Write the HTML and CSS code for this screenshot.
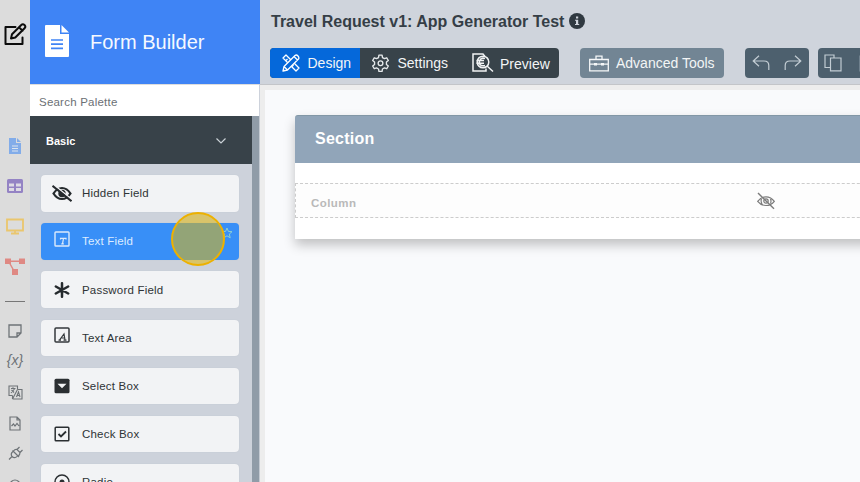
FILE: index.html
```html
<!DOCTYPE html>
<html lang="en">
<head>
<meta charset="utf-8">
<title>Form Builder</title>
<link rel="stylesheet" href="styles.css">
</head>
<body>
<div class="app">
  <nav class="rail">
    <div class="rail-edit"><svg width="24" height="24" viewBox="0 0 24 24" fill="none" stroke="#0b0b0b" stroke-width="2" stroke-linejoin="round" stroke-linecap="round"><path d="M12.500 4H2.500v17h17v-6.500"/><path d="M18 2.200 9 11.200 8 15.500l4.300-1L21.800 5Q23 3.500 21.500 2 19.800.500 18 2.200ZM16 4.200l3.500 3.500"/></svg></div>
    <div class="rail-app"><svg width="12" height="16" viewBox="0 0 12 16"><path fill="#82ace9" d="M0 0h7v5h5v11H0zM8 0l4 4H8z"/><path stroke="#dce4ee" d="M3 8h6M3 10.500h6M3 13h6"/></svg></div>
    <div class="rail-app"><svg width="16" height="14" viewBox="0 0 16 14"><rect width="16" height="14" rx="1.500" fill="#9483c4"/><path fill="#dedbe4" d="M2 4.500h5v3H2zM9 4.500h5v3H9zM2 9h5v3H2zM9 9h5v3H9z"/></svg></div>
    <div class="rail-app"><svg width="18" height="17" viewBox="0 0 18 17"><path fill="none" stroke="#eac66d" stroke-width="1.800" d="M1 1.500h16v11H1zM9 12v4M5 15.500h8"/></svg></div>
    <div class="rail-app"><svg width="20" height="17" viewBox="0 0 20 17"><path stroke="#df8983" stroke-width="1.500" d="M3 3.200h14M4 4l5 9"/><path fill="#df8983" d="M0 .5h6v5.500H0zM14 .5h6v5.500h-6zM7 11h6v6H7z"/></svg></div>
    <div class="rail-divider"></div>
    <div class="rail-tool"><svg width="14" height="14" viewBox="0 0 14 14" fill="none" stroke="#6e7377" stroke-width="1.300"><path d="M1 1h12v8l-4 4H1zM13 9H9v4"/></svg></div>
    <div class="rail-tool rail-var">{x}</div>
    <div class="rail-tool rail-tall"><svg width="15" height="15" viewBox="0 0 15 15" fill="none" stroke="#6e7377" stroke-width="1.100"><path d="M9.500 4V1H1v9.500h3.500M9.500 4.500H14V14H4.500M9.500 4.500 4.500 14M4.500 10.500V14M3 3.500h4.500M5 2.300v1.200M6.500 4 3 8M3.500 5l2.500 2.500M8.500 12l2-5 1.500 5M9 10.500h2.500"/></svg></div>
    <div class="rail-tool"><svg width="12" height="15" viewBox="0 0 12 15" fill="none" stroke="#6e7377" stroke-width="1.200"><path d="M1 1h7l3 3v10H1zM8 1v3h3M2.500 10l2-2 1.500 2 2-2.500 2 2.500"/></svg></div>
    <div class="rail-tool"><svg width="15" height="15" viewBox="0 0 15 15" fill="none" stroke="#6e7377" stroke-width="1.200"><path d="M4.500 4.500l6.500 6.500M5 5.500C3 7 3 9 4 10.500 5.500 12 8 12 9.500 10M5.500 5Q7 3 9 3.500L12 6.500Q12 8.500 10.500 9.800M9 3.500l2.500-2.500M12 6.500l2.500-2.500M4 10.500 1 13.500"/></svg></div>
    <div class="rail-tool"><svg width="12" height="8" viewBox="0 0 12 8"><circle cx="6" cy="6" r="5" fill="none" stroke="#6e7377" stroke-width="1.200"/></svg></div>
  </nav>

  <aside class="palette">
    <header class="brand">
      <svg width="24" height="32" viewBox="0 0 24 32"><path fill="#fff" d="M1 0h14v9h9v22q0 1-1 1H1q-1 0-1-1V1q0-1 1-1zM16.500 0 24 7.500h-7.500z"/><path stroke="#3f84f5" stroke-width="1.700" d="M6 15h12M6 19.200h12M6 23.400h12"/></svg>
      <span>Form Builder</span>
    </header>
    <div class="search">Search Palette</div>
    <div class="palette-body">
      <div class="palette-scroll">
        <div class="group"><span>Basic</span><svg width="10" height="6" viewBox="0 0 10 6" fill="none" stroke="#cbd2d7" stroke-width="1.200"><path d="M.5.5 5 5 9.500.5"/></svg></div>
        <div class="fields">
          <div class="field"><svg class="icon" width="20" height="17" viewBox="0 0 20 17"><path fill="none" stroke="#252a2d" stroke-width="2.200" d="M1.500 8.500Q5 3 10 3t8.500 5.500Q15 14 10 14T1.500 8.500Z"/><circle cx="10" cy="8.500" r="3.700" fill="#252a2d"/><path stroke="#f2f3f5" stroke-width="1.500" d="m2 0 18 14.500"/><path stroke="#252a2d" stroke-width="2" d="m.5.800 19 15.400"/></svg><span>Hidden Field</span></div>
          <div class="field selected"><svg class="icon raised" width="16" height="16" viewBox="0 0 16 16" fill="none" stroke="#dceafb" stroke-width="1.400"><rect x="1" y="1" width="14" height="14" rx=".8"/><path d="M6.500 8.500V7.300H12v1.200M9.500 7.300l-1 5.500M7.300 12.800h2.500" stroke-width="1.200"/></svg><span>Text Field</span>
            <svg class="star" width="12" height="12" viewBox="0 0 12 12" fill="none" stroke="#8fd0cf"><path d="m6 1 1.400 3.400 3.600.3-2.700 2.400.9 3.700L6 8.800l-3.200 2 .9-3.700L1 4.700l3.600-.3z"/></svg>
            <div class="pointer"></div></div>
          <div class="field"><svg class="icon" width="16" height="16" viewBox="0 0 16 16" stroke="#252a2d" stroke-width="2.500" stroke-linecap="round"><path d="M8 1.200v13.600M1.800 4.500l12.400 7M14.200 4.500l-12.400 7"/></svg><span>Password Field</span></div>
          <div class="field"><svg class="icon raised" width="16" height="16" viewBox="0 0 16 16" fill="none" stroke="#34393c" stroke-width="1.500"><rect x="1" y="1" width="14" height="14" rx="1"/><path d="m5.500 13 4.500-6 1 6M7 11h4M4.500 13.200H7M9.500 13.200h3" stroke-width="1.200"/></svg><span>Text Area</span></div>
          <div class="field"><svg class="icon" width="16" height="16" viewBox="0 0 16 16"><rect x=".5" y=".8" width="15" height="14.500" rx="1.500" fill="#2b2f32"/><path fill="#f2f3f5" d="M3.500 5.800h9L8 10.300z"/></svg><span>Select Box</span></div>
          <div class="field"><svg class="icon" width="16" height="16" viewBox="0 0 16 16" fill="none" stroke="#2b2f32" stroke-width="1.500"><rect x="1.200" y="1.200" width="13.600" height="13.600" rx=".8"/><path d="m4.500 8 2.500 2.500 5-5" stroke-width="1.800"/></svg><span>Check Box</span></div>
          <div class="field"><svg class="icon" width="16" height="16" viewBox="0 0 16 16"><circle cx="8" cy="8" r="7" fill="none" stroke="#2b2f32" stroke-width="1.500"/><circle cx="8" cy="8" r="2.500" fill="#2b2f32"/></svg><span>Radio</span></div>
        </div>
      </div>
      <div class="scrollbar"></div>
    </div>
  </aside>

  <main class="main">
    <header class="topbar">
      <h1 class="title"><span>Travel Request v1: App Generator Test</span><svg width="16" height="16" viewBox="0 0 16 16"><circle cx="8" cy="8" r="8" fill="#303941"/><path fill="#cfd4dc" d="M7 3.500h2.200v2H7zM6 6.700h3.200v4.200h1V12H6v-1.100h1V7.800H6z"/></svg></h1>
      <div class="toolbar">
        <div class="tabs">
          <div class="tab active"><svg width="18" height="18" viewBox="0 0 18 18" fill="none" stroke="#fff" stroke-width="1.300" stroke-linejoin="round"><path d="m4 1 13 13-3 3L1 4zM4 6.500 5.500 5M7 9.500 8.500 8M10 12.500l1.500-1.500"/><path fill="#0568da" d="M1 17l1-4.500L13 1.500Q14.500.300 16 2t.500 3L5.500 16zM2 12.500 5.500 16M12 2.500 15.500 6"/></svg><span>Design</span></div>
          <div class="tab settings"><svg width="19" height="19" viewBox="0 0 24 24" fill="none" stroke="#e5e9eb" stroke-width="1.700" stroke-linejoin="round"><path d="M9.500 4.500 10 1.500h4l.5 3 2.500 1.400 2.900-1.100 2 3.400-2.400 2v3l2.400 2-2 3.400-2.900-1.100-2.500 1.400-.5 3h-4l-.5-3L7 17.500l-2.900 1.100-2-3.400 2.400-2v-3l-2.400-2 2-3.400L7 5.900z"/><circle cx="12" cy="11.700" r="3"/></svg><span>Settings</span></div>
          <div class="tab preview"><svg width="22" height="20" viewBox="0 0 22 20" fill="none" stroke="#f1f3f4" stroke-width="1.500"><path d="M13 3.500 11 1H1v17h13v-2.500"/><circle cx="11" cy="9" r="5.800"/><path d="m15 13 6 5.500M13 5.500q-3.500-1.200-5 1.500t0 4.500 5 1M4.500 7.500H12M4.500 10.200H12"/></svg><span>Preview</span></div>
        </div>
        <div class="advanced"><svg width="20" height="17" viewBox="0 0 20 17" fill="none" stroke="#f5f7f8" stroke-width="1.300"><path d="M.7 4.500h18.600v11.300H.7zM7 4.500V1.200h6v3.300M1 9.200h18"/><path fill="#f5f7f8" stroke="none" d="M5 8h3v2.500H5zM12 8h3v2.500h-3z"/></svg><span>Advanced Tools</span></div>
        <div class="history">
          <svg width="18" height="16" viewBox="0 0 18 16" fill="none" stroke="#c2ccd3" stroke-width="1.200"><path d="M7 .8 1.200 6 7 11.200M1.500 6H12q4.800 0 4.800 4.500V15"/></svg>
          <svg width="18" height="16" viewBox="0 0 18 16" fill="none" stroke="#c2ccd3" stroke-width="1.200"><path d="m11 .8 5.800 5.200-5.800 5.200M16.500 6H6q-4.800 0-4.800 4.500V15"/></svg>
        </div>
        <div class="clipboard">
          <svg width="18" height="18" viewBox="0 0 18 18" fill="none" stroke="#c2ccd3" stroke-width="1.200"><path d="M6 13.500H1V1h9v2.500M6.500 4H17v12.800H6.500z"/></svg>
          <svg width="16" height="18" viewBox="0 0 16 18" fill="none" stroke="#8797a2" stroke-width="1.200"><path d="M1 2h14v15H1z"/></svg>
        </div>
      </div>
    </header>
    <div class="canvas">
      <section class="section">
        <h2>Section</h2>
        <div class="column"><span>Column</span><svg width="18" height="18" viewBox="0 0 18 18" fill="none" stroke="#7b7b7b" stroke-width="1.200"><path d="M.7 9.300Q4 4.800 9 4.800T17.300 9.300Q14 13.500 9 13.500T.7 9.300ZM4.500 7Q3.500 9 5 12M13.500 7q1 2 0 4.500"/><circle cx="9" cy="9" r="2.200"/><path d="m1 1 16 15.800" stroke-width="1.400"/></svg></div>
      </section>
    </div>
  </main>
</div>
</body>
</html>
```

FILE: styles.css
```css
* { box-sizing: border-box; }
body { margin: 0; font-family: "Liberation Sans", Arial, sans-serif; }
svg { display: block; flex: none; }
.app { display: flex; width: 860px; height: 482px; overflow: hidden; }

.rail { width: 30px; flex: none; background: #dcdcdc; height: 482px; overflow: hidden; }
.rail > div { display: flex; align-items: center; justify-content: center; }
.rail-edit { height: 70px; margin-bottom: 56px; }
.rail-app { height: 40px; }
.rail-divider { height: 30px; }
.rail-divider::before { content: ""; width: 20px; height: 1px; background: #777; }
.rail-tool { height: 30px; }
.rail .rail-tall { height: 32px; padding-bottom: 0; }
.rail .rail-var { color: #6e7377; font-size: 14px; font-style: italic; padding-bottom: 2px; }

.palette { width: 230px; flex: none; display: flex; flex-direction: column; background: #cdd2db; height: 482px; }
.brand { height: 84px; flex: none; background: #3f84f5; color: #f5f9ff; display: flex; align-items: center; gap: 21px; padding: 0 0 2px 15px; font-size: 20px; }
.brand span { padding-top: 3px; }
.search { height: 32px; flex: none; margin-right: 1px; background: #fff; color: #6c7075; font-size: 11.500px; letter-spacing: .22px; line-height: 35px; padding-left: 9px; border-top: 1px solid #ddd; }
.palette-body { flex: 1; min-height: 0; display: flex; overflow: hidden; }
.palette-scroll { width: 222px; }
.scrollbar { width: 8px; background: #909ca8; border-right: 1px solid #c5cbd3; }
.group { height: 48px; background: #384249; color: #fff; font-size: 11px; font-weight: bold; display: flex; align-items: center; justify-content: space-between; padding: 2px 26px 0 16px; }
.group span { padding-bottom: 1px; }
.fields { display: flex; flex-direction: column; gap: 11.700px; padding: 11px 13px 0 11px; }
.field { height: 36.500px; flex: none; background: #f2f3f5; border-radius: 4px; display: flex; align-items: center; color: #2f3336; font-size: 11.500px; letter-spacing: .2px; position: relative; box-shadow: 0 0 1px #bac0c9; }
.icon { margin: 0 12px 0 13px; }
.icon[width="20"] { margin: 0 10px 0 11px; }
.icon.raised { margin-bottom: 5px; }
.selected { background: #388ff7; color: #dcecff; }
.star { position: absolute; right: 6px; top: 4px; }
.pointer { position: absolute; left: 129.500px; top: -11px; width: 54px; height: 54px; border-radius: 50%; border: 2px solid #edb100; background: rgba(228, 183, 5, .53); }

.main { flex: 1; min-width: 0; display: flex; flex-direction: column; background: #ededed; }
.topbar { height: 85px; flex: none; background: #cfd4dc; border-bottom: 1px solid #c3c5c9; padding: 11px 0 0 10px; }
.title { margin: 0 0 16px; height: 21px; display: flex; align-items: center; gap: 5px; font-size: 16px; color: #353e46; padding-left: 1px; }
.title svg { margin-bottom: 1px; }
.toolbar { display: flex; width: 700px; }
.tabs, .advanced, .history, .clipboard { height: 30px; border-radius: 4px; display: flex; align-items: center; overflow: hidden; flex: none; }
.tabs, .advanced { color: #f3f5f6; font-size: 14px; }
.tabs { width: 289px; background: #38434a; margin-right: 20.500px; }
.tab { height: 30px; display: flex; align-items: center; }
.active { width: 90px; background: #0568da; padding-left: 12px; gap: 7.500px; }
.settings { width: 103px; padding-left: 11px; gap: 7.500px; }
.preview { padding-left: 9px; gap: 6px; }
.preview span { padding-top: 1px; }
.advanced { width: 144.500px; background: #728594; padding-left: 9.500px; gap: 7px; margin-right: 21px; }
.history { width: 64px; background: #4d606e; justify-content: space-between; padding: 0 7px; margin-right: 9px; }
.clipboard { width: 100px; background: #4d606e; padding-left: 6px; gap: 17px; }
.canvas { flex: 1; margin: 5px 0 0 5px; padding: 25px 0 0 30px; background: #f9fafc; overflow: hidden; }
.section { width: 620px; height: 124px; background: #fff; border-radius: 3px 3px 0 0; box-shadow: 0 6px 12px rgba(0, 0, 0, .23); }
.section h2 { margin: 0; height: 48px; padding-left: 20px; background: #91a5b9; border-top: 1px solid #8297a6; border-radius: 3px 3px 0 0; color: #fff; font-size: 16px; letter-spacing: .25px; line-height: 46px; }
.column { margin-top: 20px; height: 35px; border: 1px dashed #ccc; background: #fdfdfd; display: flex; align-items: center; color: #b9b9b9; font-size: 11.500px; font-weight: bold; letter-spacing: .45px; padding-left: 15px; }
.column span { width: 446px; padding-top: 5px; }
```
